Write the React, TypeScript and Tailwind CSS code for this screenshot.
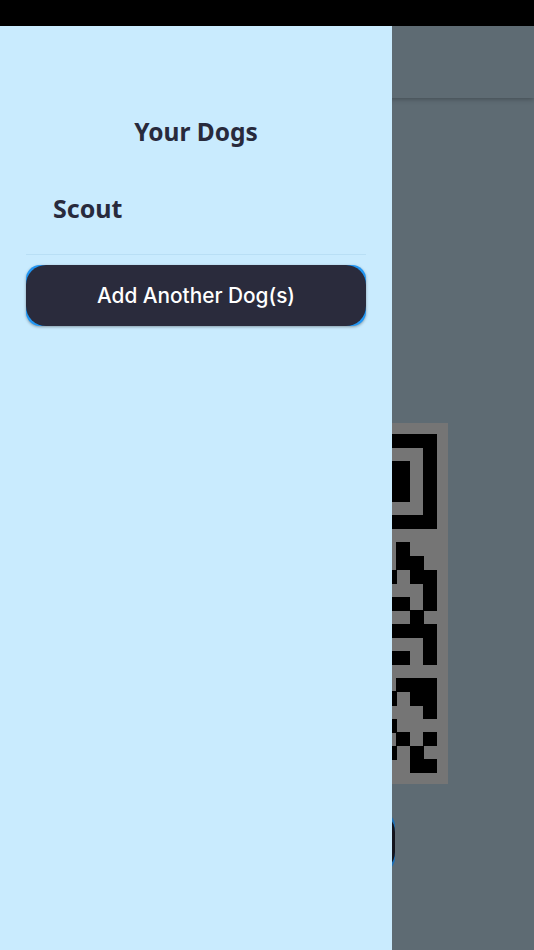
const MODULE = 13.55;
const QUIET = 11;

// only the right edge of the code shows past the drawer: [row, column]
const finder = [
  [0, 18, 7, 1],
  [6, 18, 7, 1],
  [0, 18, 1, 7],
  [0, 24, 1, 7],
  [2, 20, 3, 3],
];

const cells = [
  [8, 22], [9, 22], [9, 23], [10, 21], [10, 23], [10, 24], [11, 24],
  [12, 21], [12, 22], [12, 24], [13, 23], [14, 21], [14, 22], [14, 23], [14, 24],
  [15, 24], [16, 21], [16, 22], [16, 24], [18, 22], [18, 23], [18, 24],
  [19, 21], [19, 23], [19, 24], [20, 24], [21, 21], [22, 22], [22, 24],
  [23, 21], [23, 23], [24, 23], [24, 24],
];

function QrCode() {
  return (
    <svg viewBox="0 0 361 361" shapeRendering="crispEdges" className="block h-[361px] w-[361px] shrink-0">
      <rect width="361" height="361" fill="#757575" />
      {finder.map(([row, col, w, h]) => (
        <rect
          key={`${row}-${col}-${w}`}
          x={QUIET + col * MODULE}
          y={QUIET + row * MODULE}
          width={w * MODULE}
          height={h * MODULE}
          fill="#000"
        />
      ))}
      {cells.map(([row, col]) => (
        <rect
          key={`${row}-${col}`}
          x={QUIET + col * MODULE}
          y={QUIET + row * MODULE}
          width={MODULE + 0.5}
          height={MODULE + 0.5}
          fill="#000"
        />
      ))}
    </svg>
  );
}

export default function App() {
  return (
    <div className="flex h-[950px] w-[534px] flex-col overflow-hidden bg-black">
      <div className="h-[26px] shrink-0 bg-black" />
      <div className="relative flex-1 overflow-hidden bg-[#5e6b73]">
        <div className="flex flex-col items-center">
          <div className="h-[72px] w-full bg-[#5e6b73] shadow-[0_1px_5px_rgba(0,0,0,0.3)]" />
          <div className="mt-[325px]">
            <QrCode />
          </div>
          <div className="mt-[28px] h-[60px] w-[256px] rounded-[14px] bg-[#1c6fb5]">
            <div className="h-full w-full rounded-[20px] bg-[#13141d]" />
          </div>
        </div>

        <aside className="absolute inset-y-0 left-0 flex w-[392px] flex-col bg-[#c9ebfe] px-[26px] font-['Noto_Sans',sans-serif] text-[#282a3c]">
          <h1 className="mt-[88px] text-center text-[24.5px] leading-[36px] font-bold">Your Dogs</h1>
          <div className="mt-[39px] flex h-[66px] items-start border-b border-[#b9dff5] pl-[27px]">
            <span className="text-[25px] leading-[38px] font-bold">Scout</span>
          </div>
          <button className="mt-[10px] h-[61px] w-[340px] rounded-[14px] bg-[#2196f3] shadow-[0_1px_3px_rgba(0,0,0,0.35)]">
            <span className="flex h-full w-full items-center justify-center rounded-[20px] bg-[#2a2b3c] font-['Inter',sans-serif] text-[20.8px] font-medium text-white">
              Add Another Dog(s)
            </span>
          </button>
        </aside>
      </div>
    </div>
  );
}
